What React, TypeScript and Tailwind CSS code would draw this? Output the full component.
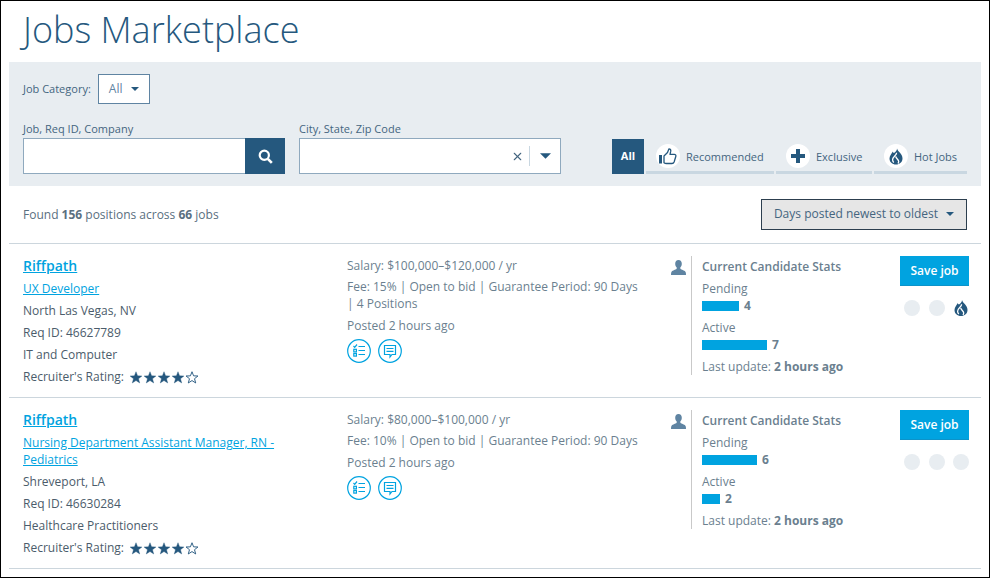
import { X } from 'lucide-react'

function Caret({ className = '' }: { className?: string }) {
  return (
    <svg viewBox="0 0 8 4" className={`w-2 h-1 ${className}`}>
      <polygon points="0,0 8,0 4,4" fill="currentColor" />
    </svg>
  )
}

function Flame({ className = '' }: { className?: string }) {
  return (
    <svg viewBox="0 0 16 16" className={className}>
      <path
        fill="#25587e"
        d="M9 0c.6 3 5.500 5 5.500 10 0 3.500-2.800 6-6.500 6s-6.500-2.500-6.500-6c0-3 2.300-5 3.300-7 .4 1.500 1.200 1.800 1.900 1C7.800 3 9.100 1.800 9 0z"
      />
      <path
        fill="none"
        stroke="#fff"
        strokeWidth="1.300"
        d="M8.600 4.200C8.700 7 4.600 8 4.600 11.300c0 1.100.5 2 1.200 2.700M7.700 8c.5 2.200 3 3 3 5 0 .8-.3 1.500-.8 2"
      />
    </svg>
  )
}

function Plus() {
  return (
    <svg viewBox="0 0 14 14" className="w-[14px] h-[14px]">
      <path fill="#25587e" d="M5 0h4v5h5v4H9v5H5V9H0V5h5z" />
    </svg>
  )
}

function Thumb() {
  return (
    <svg viewBox="0 0 18 17" className="w-[18px] h-[17px]">
      <rect x="0" y="7" width="3" height="8.500" fill="#25587e" />
      <path
        d="M5 8l3.500-3.500L10 .8c1.500 0 2 1.200 1.700 2.600L11 6.300h4.300c1.300 0 1.900 1.100 1.500 2.200l-1.700 5.500c-.4 1-1.100 1.500-2.100 1.500H7.500c-1 0-1.800-.3-2.500-.8z"
        fill="none"
        stroke="#25587e"
        strokeWidth="1.300"
        strokeLinejoin="round"
      />
    </svg>
  )
}

function SearchGlyph() {
  return (
    <svg viewBox="0 0 15 15" className="w-[15px] h-[15px]" fill="none" stroke="#fff">
      <circle cx="6.300" cy="6.300" r="4.600" strokeWidth="2.200" />
      <path d="M9.800 9.800l4 4" strokeWidth="2.600" />
    </svg>
  )
}

function Person() {
  return (
    <svg viewBox="0 0 15 15" className="w-[15px] h-[15px]">
      <path
        fill="#5f84a2"
        d="M7.500 0C5.400 0 4.200 1.500 4.200 3.700c0 1.600.7 3 1.500 3.800.2.900 0 1.500-.6 1.800C3.500 10.100 1 10.700.4 12c-.3.800-.4 1.800-.4 3h15c0-1.200-.1-2.200-.4-3-.6-1.300-3.100-1.900-4.700-2.700-.6-.3-.8-.9-.6-1.800.8-.8 1.500-2.200 1.500-3.800C10.800 1.500 9.600 0 7.500 0z"
      />
    </svg>
  )
}

function Star({ filled }: { filled: boolean }) {
  return (
    <svg viewBox="0 0 14 14" className="w-[14px] h-[13px]">
      <polygon
        points="7,0.8 8.700,5.200 13.400,5.400 9.700,8.300 11,12.900 7,10.300 3,12.900 4.300,8.300 0.600,5.400 5.300,5.200"
        fill={filled ? '#25587e' : 'none'}
        stroke="#25587e"
        strokeWidth={filled ? 0.4 : 1}
      />
    </svg>
  )
}

function ChecklistIcon() {
  return (
    <svg viewBox="0 0 24 24" className="w-6 h-6" fill="none" stroke="#00a3e0" strokeWidth="1.200">
      <circle cx="12" cy="12" r="11.300" />
      <path d="M6.500 7l1.200 1.300L10 5.500M11.500 7.500H18M11.500 11.500H18M11.500 15.500H18" />
      <rect x="6.800" y="10.300" width="2.600" height="2.600" />
      <rect x="6.800" y="14.500" width="2.600" height="2.600" />
    </svg>
  )
}

function MessageIcon() {
  return (
    <svg viewBox="0 0 24 24" className="w-6 h-6" fill="none" stroke="#00a3e0" strokeWidth="1.200">
      <circle cx="12" cy="12" r="11.300" />
      <path d="M6.500 6.500h11v9h-3.500l-2 2.500v-2.500H6.500z" />
      <path d="M8.500 9.500h7M8.500 12.300h7" />
    </svg>
  )
}

type Job = {
  title: string
  city: string
  req: string
  category: string
  salary: string
  fee: string
  pending: number
  pendingW: number
  active: number
  activeW: number
  hot: boolean
  height: string
}

const jobs: Job[] = [
  {
    title: 'UX Developer',
    city: 'North Las Vegas, NV',
    req: '46627789',
    category: 'IT and Computer',
    salary: '$100,000–$120,000 / yr',
    fee: 'Fee: 15% | Open to bid | Guarantee Period: 90 Days | 4 Positions',
    pending: 4,
    pendingW: 37,
    active: 7,
    activeW: 65,
    hot: true,
    height: 'h-[154px]',
  },
  {
    title: 'Nursing Department Assistant Manager, RN - Pediatrics',
    city: 'Shreveport, LA',
    req: '46630284',
    category: 'Healthcare Practitioners',
    salary: '$80,000–$100,000 / yr',
    fee: 'Fee: 10% | Open to bid | Guarantee Period: 90 Days',
    pending: 6,
    pendingW: 55,
    active: 2,
    activeW: 18,
    hot: false,
    height: 'h-[171px]',
  },
]

function JobRow({ job }: { job: Job }) {
  return (
    <div className={`flex border-b border-[#ccd6dd] pl-[14px] pt-[12px] ${job.height}`}>
      <div className="w-[324px] shrink-0 text-[12px] leading-[22px]">
        <a className="block text-[14px] leading-[20px] font-semibold text-[#00a3e0] underline">Riffpath</a>
        <a className="block w-[260px] mt-[2px] leading-[17px] py-[2px] text-[#00a3e0] underline">{job.title}</a>
        <div className="mt-[1px]">{job.city}</div>
        <div>Req ID: {job.req}</div>
        <div>{job.category}</div>
        <div className="flex items-center">
          <span className="mr-[5px]">Recruiter's Rating:</span>
          {[1, 1, 1, 1, 0].map((s, i) => (
            <Star key={i} filled={!!s} />
          ))}
        </div>
      </div>

      <div className="w-[324px] shrink-0 text-[12px] text-[#6b7f8f]">
        <div className="leading-[20px]">Salary: {job.salary}</div>
        <div className="mt-[2px] leading-[17px] w-[296px]">{job.fee}</div>
        <div className="mt-[3px] leading-[22px]">Posted 2 hours ago</div>
        <div className="flex gap-[7px] mt-[2px]">
          <ChecklistIcon />
          <MessageIcon />
        </div>
      </div>

      <div className="w-[20px] shrink-0 pt-[4px]">
        <Person />
      </div>

      <div className="w-[209px] shrink-0 h-[119px] border-l border-[#c9c9c9] pl-[10px] pt-[1px] text-[12px] text-[#6b7f8f]">
        <div className="font-semibold leading-[20px]">Current Candidate Stats</div>
        <div className="mt-[3px] leading-[18px]">Pending</div>
        <div className="flex items-center h-[16px] font-bold">
          <div className="h-[10px] bg-[#00a3e0] mr-[5px]" style={{ width: job.pendingW }} />
          {job.pending}
        </div>
        <div className="mt-[4px] leading-[19px]">Active</div>
        <div className="flex items-center h-[16px] font-bold">
          <div className="h-[10px] bg-[#00a3e0] mr-[5px]" style={{ width: job.activeW }} />
          {job.active}
        </div>
        <div className="mt-[4px] leading-[20px]">
          Last update: <span className="font-bold">2 hours ago</span>
        </div>
      </div>

      <div className="w-[69px] shrink-0">
        <button className="w-[69px] h-[30px] bg-[#00a3e0] text-white text-[12px] font-semibold border-b border-[#0d93c9]">Save job</button>
        <div className="flex justify-between items-center mt-[14px] pl-[4px] h-[16px]">
          <div className="w-[16px] h-[16px] rounded-full bg-[#e8edf1]" />
          <div className="w-[16px] h-[16px] rounded-full bg-[#e8edf1]" />
          {job.hot ? <Flame className="w-[16px] h-[16px]" /> : <div className="w-[16px] h-[16px] rounded-full bg-[#e8edf1]" />}
        </div>
      </div>
    </div>
  )
}

function Tab({ label, icon, width }: { label: string; icon: React.ReactNode; width: string }) {
  return (
    <div className={`${width} h-[35px] border-b-[3px] border-[#c9d7e1] flex items-center pl-[10px] pt-[2px]`}>
      <span className="w-[24px] h-[24px] rounded-full bg-white flex items-center justify-center mr-[6px]">{icon}</span>
      <span className="text-[11px] text-[#44657f] pt-[3px]">{label}</span>
    </div>
  )
}

export default function App() {
  return (
    <div className="h-[578px] w-[990px] border border-black bg-white overflow-hidden text-[#4b5c6b] font-['Open_Sans',sans-serif]">
      <h1 className="h-[61px] pl-[22px] pt-[8px] text-[36px] leading-[42px] font-light text-[#25587e]">Jobs Marketplace</h1>

      <div className="mx-[8px] w-[972px] h-[124px] bg-[#e8edf1] pl-[14px] pt-[12px]">
        <div className="flex items-center h-[30px]">
          <span className="text-[11px] text-[#44657f] mr-[7px]">Job Category:</span>
          <div className="w-[52px] h-[30px] bg-white border border-[#5f84a2] flex items-center pl-[10px] text-[12px] text-[#5f84a2]">
            All
            <Caret className="ml-[9px] text-[#25587e]" />
          </div>
        </div>
        <div className="flex items-end mt-[16px]">
          <div className="w-[262px]">
            <div className="text-[11px] leading-[17px] pb-[1px] text-[#44657f]">Job, Req ID, Company</div>
            <div className="flex h-[36px] border border-[#8fa9be] bg-white">
              <div className="flex-1" />
              <div className="w-[40px] -my-px -mr-px bg-[#25587e] flex items-center justify-center">
                <SearchGlyph />
              </div>
            </div>
          </div>
          <div className="w-[262px] ml-[14px]">
            <div className="text-[11px] leading-[17px] pb-[1px] text-[#44657f]">City, State, Zip Code</div>
            <div className="flex items-center justify-end h-[36px] border border-[#8fa9be] bg-white pr-[9px]">
              <X size={13} strokeWidth={2} className="text-[#44657f] mr-[5px]" />
              <div className="h-[20px] border-l border-[#c9d7e1] mr-[10px]" />
              <Caret className="w-[11px] h-[6px] text-[#25587e]" />
            </div>
          </div>
          <div className="flex ml-[51px] gap-[2px]">
            <div className="w-[32px] h-[35px] bg-[#25587e] text-white text-[11px] font-bold flex items-center justify-center">All</div>
            <Tab label="Recommended" width="w-[128px]" icon={<Thumb />} />
            <Tab label="Exclusive" width="w-[96px]" icon={<Plus />} />
            <Tab label="Hot Jobs" width="w-[93px]" icon={<Flame className="w-[16px] h-[17px]" />} />
          </div>
        </div>
      </div>

      <div className="flex justify-between items-center h-[58px] pb-[1px] mx-[8px] pl-[14px] pr-[14px] border-b border-[#ccd6dd] w-[972px] text-[12px] text-[#5a6f80]">
        <div className="pt-[1px]">
          Found <b className="font-bold">156</b> positions across <b className="font-bold">66</b> jobs
        </div>
        <button className="w-[206px] h-[31px] bg-[#e6e6e6] border border-[#2c3e4e] flex items-center justify-center text-[12px] text-[#44657f]">
          Days posted newest to oldest
          <Caret className="ml-[8px] text-[#25587e]" />
        </button>
      </div>

      <div className="mx-[8px] w-[972px]">
        {jobs.map(job => (
          <JobRow key={job.req} job={job} />
        ))}
      </div>
    </div>
  )
}
